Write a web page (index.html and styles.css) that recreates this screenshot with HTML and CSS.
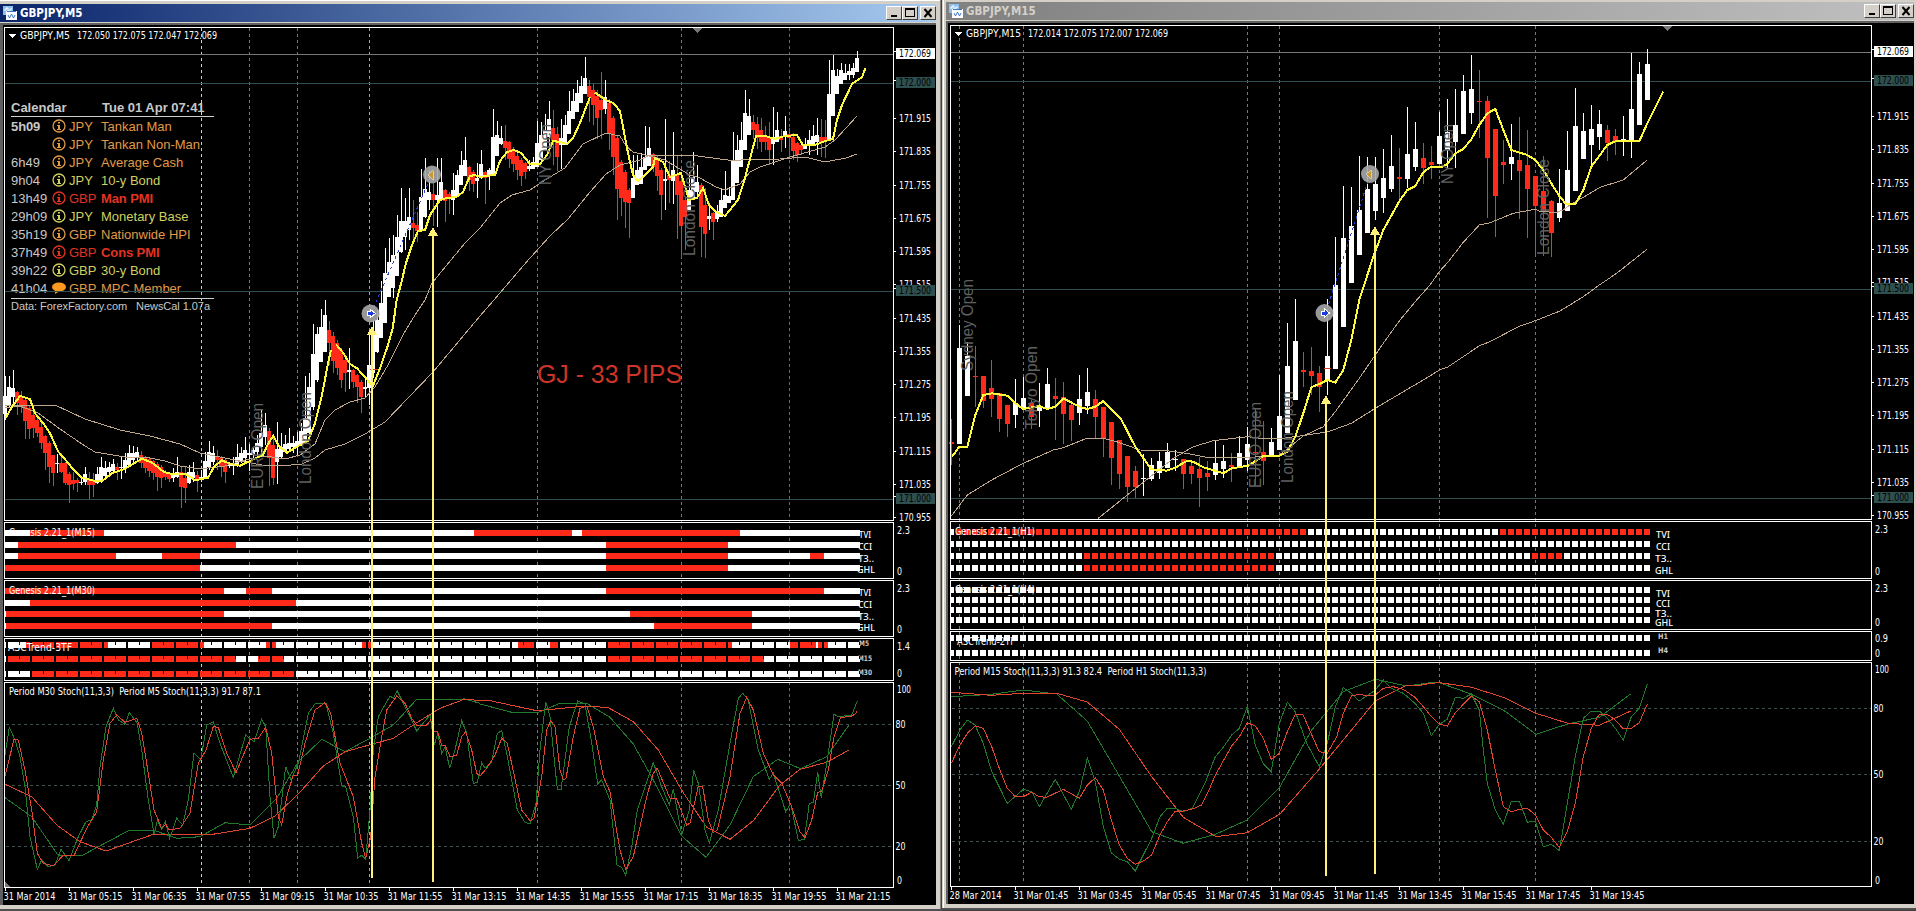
FILE: index.html
```html
<!DOCTYPE html>
<html lang="en">
<head>
    <meta charset="utf-8">
    <meta name="viewport" content="width=device-width, initial-scale=1">
    <title>GBPJPY</title>
    <link rel="stylesheet" href="styles.css">
</head>
<body>
    <div class="desktop">
        <div class="window left">
            <div class="titlebar active">
                <svg class="appicon" viewBox="0 0 14 14"><rect x="0" y="0" width="10" height="9" fill="#8ec0ee"/><path d="M1 4h2v-2h2v3h2v-2h2" fill="none" stroke="#fff"/><rect x="3" y="5" width="11" height="9" fill="#fff"/><path d="M4 5.500h9" stroke="#3a78c8"/><path d="M5 9l1.500 3 2-4 2 4 1.500-3" fill="none" stroke="#3a78c8"/></svg>
                <span class="caption">GBPJPY,M5</span>
                <div class="buttons">
                    <span class="btn"><svg viewBox="0 0 14 12"><path d="M4 8h6v2H4z"/></svg></span>
                    <span class="btn"><svg viewBox="0 0 14 12"><path d="M2 1h10v9H2zM3 3v6h8V3z" fill-rule="evenodd"/></svg></span>
                    <span class="btn close"><svg viewBox="0 0 14 12"><path d="M3.500 2l7 8M10.500 2l-7 8" stroke="#000" stroke-width="2"/></svg></span>
                </div>
            </div>
            <div class="client">
                <div class="calendar">
                    <div class="calhead"><span>Calendar</span><span>Tue 01 Apr 07:41</span></div>
                    <div class="rows" id="news"></div>
                    <div class="calfoot"><span>Data: ForexFactory.com</span><span>NewsCal 1.07a</span></div>
                </div>
                <svg id="m5" class="chart" viewBox="3 25 933 880"></svg>
            </div>
        </div>
        <div class="window right">
            <div class="titlebar">
                <svg class="appicon" viewBox="0 0 14 14"><rect x="0" y="0" width="10" height="9" fill="#8ec0ee"/><path d="M1 4h2v-2h2v3h2v-2h2" fill="none" stroke="#fff"/><rect x="3" y="5" width="11" height="9" fill="#fff"/><path d="M4 5.500h9" stroke="#3a78c8"/><path d="M5 9l1.500 3 2-4 2 4 1.500-3" fill="none" stroke="#3a78c8"/></svg>
                <span class="caption">GBPJPY,M15</span>
                <div class="buttons">
                    <span class="btn"><svg viewBox="0 0 14 12"><path d="M4 8h6v2H4z"/></svg></span>
                    <span class="btn"><svg viewBox="0 0 14 12"><path d="M2 1h10v9H2zM3 3v6h8V3z" fill-rule="evenodd"/></svg></span>
                    <span class="btn close"><svg viewBox="0 0 14 12"><path d="M3.500 2l7 8M10.500 2l-7 8" stroke="#000" stroke-width="2"/></svg></span>
                </div>
            </div>
            <div class="client">
                <svg id="m15" class="chart" viewBox="948 23 966 881"></svg>
            </div>
        </div>
    </div>
    <script src="charts.js"></script>
</body>
</html>
```

FILE: styles.css
```css
body {
    margin: 0;
    background-color: #000;
    overflow: hidden;
}
.desktop {
    display: flex;
    width: 1916px;
    height: 911px;
    background-color: #404040;
}
.window {
    display: flex;
    flex-direction: column;
    box-sizing: border-box;
    background-color: #d4d0c8;
}
.left {
    width: 942px;
    height: 911px;
    padding: 4px 6px 4px 0;
    border-bottom: 2px solid #505050;
    box-shadow: inset -1px 0 #404040, inset -2px 0 #808080, inset 0 1px #fff;
}
.right {
    width: 974px;
    height: 910px;
    padding: 2px 2px 4px 4px;
    border-bottom: 2px solid #505050;
    box-shadow: inset 1px 0 #d4d0c8, inset 2px 0 #fff;
}
.titlebar {
    display: flex;
    align-items: center;
    height: 18px;
    padding: 0 0 0 3px;
    background: linear-gradient(to right, #808080, #c0c0c0);
    color: #d4d0c8;
}
.active {
    background: linear-gradient(to right, #0a246a, #a6caf0);
    color: #fff;
}
.appicon {
    width: 14px;
    height: 14px;
}
.caption {
    flex: 1;
    margin-left: 3px;
    font: bold 11.5px "DejaVu Sans Condensed", "DejaVu Sans", sans-serif;
}
.buttons {
    display: flex;
}
.btn {
    box-sizing: border-box;
    width: 16px;
    height: 14px;
    background-color: #d4d0c8;
    border: 1px solid;
    border-color: #fff #404040 #404040 #fff;
}
.btn svg {
    display: block;
    width: 14px;
    height: 12px;
}
.close {
    margin-left: 2px;
}
.client {
    position: relative;
    flex: 1;
    box-sizing: border-box;
    margin-top: 1px;
    border-top: 2px solid #606060;
    border-left: 2px solid #606060;
    background-color: #000;
}
.left .client {
    border-left-width: 3px;
}
.chart {
    position: relative;
    display: block;
    width: 100%;
    height: 100%;
    shape-rendering: crispEdges;
}

/* news calendar, lies under the chart lines */
.calendar {
    position: absolute;
    left: 8px;
    top: 74px;
    width: 203px;
    font: 13px "Liberation Sans", Arial, sans-serif;
    color: #c8c8c8;
}
.calhead {
    display: grid;
    grid-template-columns: 91px 1fr;
    height: 17px;
    line-height: 18px;
    border-bottom: 1px solid #d0d0d0;
    font-weight: bold;
    white-space: nowrap;
}
.news {
    display: grid;
    grid-template-columns: 41px 17px 32px 1fr;
    height: 18px;
    line-height: 19px;
    white-space: nowrap;
}
.news svg {
    width: 14px;
    height: 14px;
    margin-top: 2px;
}
.news b {
    letter-spacing: -0.1px;
}
.news .time {
    color: #c8c8c8;
}
.orange {
    color: #e09a48;
}
.yellow {
    color: #cfd060;
}
.red {
    color: #e23322;
}
.calfoot {
    display: flex;
    gap: 9px;
    border-top: 1px solid #d0d0d0;
    margin-top: 1px;
    font-size: 11px;
    letter-spacing: -0.05px;
    line-height: 14px;
    white-space: nowrap;
}

/* chart parts */
.chart text {
    font: 9.8px "DejaVu Sans Condensed", "DejaVu Sans", sans-serif;
    fill: #fff;
    white-space: pre;
}
.chart .row {
    font: 500 8.8px "Noto Sans", sans-serif;
    fill: #fff;
}
.chart .tf {
    font: bold 7.5px "DejaVu Sans", sans-serif;
    fill: #c8c8c8;
}
.chart .session {
    font: 16px "Liberation Sans", Arial, sans-serif;
    fill: #606060;
}
.chart .note {
    font: 25px "Liberation Sans", Arial, sans-serif;
    fill: #cc3527;
}
.chart .dark {
    fill: #000;
}
.w {
    fill: #fff;
}
.r {
    fill: #ff2a1a;
}
.wr {
    fill: #d8402e;
}
.frame {
    fill: none;
    stroke: #fff;
}
.teal {
    fill: #2f4f4f;
}
.grey {
    fill: #777;
}
.dash {
    fill: none;
    stroke-dasharray: 3 3;
}
.level {
    fill: none;
    stroke: #3c5050;
    stroke-dasharray: 3 3;
}
.ma {
    fill: none;
    stroke: #bfa78c;
}
.fastma {
    fill: none;
    stroke: #fffb3c;
    stroke-width: 2;
}
.green {
    fill: none;
    stroke: #1f7a2c;
}
.signal {
    fill: none;
    stroke: #e0452f;
}
.trade {
    fill: none;
    stroke: #2442d8;
    stroke-dasharray: 3 3;
}
.arrow {
    fill: #fff078;
}
.marker {
    fill: #a8a8a8;
    opacity: .9;
    shape-rendering: auto;
}
```

FILE: charts.js
```js
const NS = 'http://www.w3.org/2000/svg';

function add(svg, tag, attrs, str) {
    const el = document.createElementNS(NS, tag);
    for (const k in attrs) el.setAttribute(k, attrs[k]);
    if (str) el.textContent = str;
    svg.appendChild(el);
    return el;
}

function box(svg, cls, x, y, w, h) {
    add(svg, 'rect', { class: cls, x: x, y: y, width: w, height: h });
}

// y is the middle of the text, w its drawn width
function label(svg, x, y, str, w, cls) {
    add(svg, 'text', { class: cls || '', x: x, y: y + 3.5, textLength: w, lengthAdjust: 'spacingAndGlyphs' }, str);
}

// points are in thirds of a pixel from the origin
function line(svg, cls, ox, oy, pts) {
    const p = pts.trim().split(/\s+/).map(s => {
        const [x, y] = s.split(',').map(Number);
        return (ox + x / 3).toFixed(1) + ',' + (oy + y / 3).toFixed(1);
    });
    add(svg, 'polyline', { class: cls, points: p.join(' ') });
}

function candles(svg, x0, step, width, data) {
    data.trim().split(/\s*,\s*/).forEach((row, i) => {
        const [c, h, t, b, l] = row.split(' ');
        const x = x0 + step * i;
        box(svg, c === 'r' ? 'wr' : 'w', x, +h, 1, Math.max(l - h, 1));
        box(svg, c, x - Math.floor(width / 2), +t, width, Math.max(b - t, 1));
    });
}

function frames(svg, x1, x2, list) {
    list.forEach(([top, bottom]) => box(svg, 'frame', x1 + .5, top + .5, x2 - x1, bottom - top));
}

function arrow(svg, x, top, bottom) {
    box(svg, 'arrow', x - 1, top + 8, 2, bottom - top - 8);
    add(svg, 'path', { class: 'arrow', d: `M${x} ${top}l5 9h-10z` });
}

function entry(svg, x, y) {
    add(svg, 'circle', { class: 'marker', cx: x, cy: y, r: 9 });
    add(svg, 'path', { d: `M${x - 3} ${y - 2}h3v-2l5 4-5 4v-2h-3z`, fill: '#1c3ce0', stroke: '#fff' });
}

function exit(svg, x, y) {
    add(svg, 'circle', { class: 'marker', cx: x, cy: y, r: 9 });
    add(svg, 'path', { d: `M${x - 4} ${y}l5-4v9z`, fill: '#c89a30', stroke: '#eee', 'stroke-width': .6 });
}

function session(svg, x, y, str, len) {
    add(svg, 'text', { class: 'session', transform: `translate(${x} ${y}) rotate(-90)`, textLength: len, lengthAdjust: 'spacingAndGlyphs' }, str);
}

function vline(svg, x, y1, y2, color) {
    add(svg, 'path', { class: 'dash', d: `M${x + .5} ${y1}V${y2}`, stroke: color || '#777' });
}

function prices(svg, x, first, boxes) {
    for (let i = 0; i < 13; i++) {
        const y = first + Math.round(i * 33.25);
        label(svg, x + 5, y, (171.915 - i * .08).toFixed(3), 32);
        box(svg, 'w', x, y, 2, 1);
    }
    boxes.forEach(([y, str, cls]) => {
        box(svg, cls, x + 2, y, 39, 11);
        label(svg, x + 5, y + 5.5, str, 32, 'dark');
        box(svg, 'w', x, y + 3, 2, 1);
    });
}

/* ---------- M5 ---------- */
const m5 = document.getElementById('m5');
vline(m5, 201, 28, 884, '#d6dc64');
[249, 297, 537, 681].forEach(x => vline(m5, x, 28, 884));
vline(m5, 369, 28, 884, '#e8963c');
vline(m5, 789, 28, 884, '#d04030');
box(m5, 'grey', 5, 54, 889, 1);
[83, 291, 499].forEach(y => box(m5, 'teal', 5, y, 889, 1));
[724, 785, 846].forEach(y => add(m5, 'path', { class: 'level', d: `M6 ${y + .5}H893` }));

candles(m5, 5, 4, 4, `
w 376 396 414 420,w 376 387 406 407,w 370 388 397 403,r 391 392 403 415,r 391 396 405 413,r 399 400 421 439,r 406 408 429 439,r 408 415 428 438,
r 417 420 433 437,r 423 427 443 449,r 435 436 453 470,r 441 443 467 483,r 455 455 473 486,w 454 463 464 473,r 453 463 472 473,r 462 463 483 485,
r 472 474 485 503,r 472 480 484 490,r 478 480 483 492,w 477 482 483 485,w 467 474 482 485,r 472 479 485 499,r 473 481 485 497,w 467 474 483 484,
w 457 467 482 483,w 461 468 476 480,w 462 467 472 477,w 459 464 471 474,r 463 467 470 480,w 457 467 468 479,w 453 460 468 473,w 445 453 465 467,
w 446 453 460 463,w 447 452 457 460,r 451 455 463 468,r 456 457 468 473,r 458 459 471 477,r 460 461 473 480,r 462 464 477 491,r 465 467 478 488,
r 470 472 477 480,r 473 474 479 482,w 468 473 478 482,w 457 472 477 478,r 466 472 487 508,r 467 478 488 503,w 465 472 483 484,w 462 472 478 482,
r 471 475 481 492,w 470 477 479 482,w 452 461 478 479,w 441 452 467 470,w 446 453 462 465,r 450 456 460 470,r 456 458 467 477,r 459 460 472 483,
w 462 465 466 468,w 457 463 466 475,w 444 457 466 467,w 447 453 461 463,w 437 450 458 462,w 444 453 455 471,w 447 450 455 458,w 435 443 452 455,
w 410 433 447 457,w 413 425 437 445,r 428 431 458 486,r 436 445 478 485,w 422 449 462 484,w 433 447 457 458,w 435 444 452 452,w 428 443 449 450,
w 436 443 447 453,w 432 441 447 455,w 423 431 445 446,w 376 418 443 444,w 373 387 433 435,w 324 354 407 410,w 327 334 380 382,w 309 327 362 362,
w 300 315 352 352,r 321 330 343 365,r 332 336 361 373,r 340 343 368 375,r 348 350 380 388,r 358 360 373 392,w 348 370 372 389,r 369 370 382 388,
r 374 375 387 403,r 380 382 397 413,w 377 387 389 397,w 330 365 388 405,w 320 333 373 378,w 310 320 352 353,w 281 303 338 338,w 248 273 323 323,
w 238 262 297 297,w 235 255 288 298,w 215 237 276 276,w 188 221 252 253,w 198 221 237 250,w 188 217 230 240,r 200 223 228 244,r 212 225 231 242,
w 169 197 230 230,w 158 189 217 218,w 170 192 200 210,r 178 194 200 226,w 158 195 200 227,w 158 182 200 200,r 189 190 201 222,r 192 194 198 214,
w 173 190 200 215,w 170 175 197 197,w 151 165 185 185,w 137 160 176 176,r 166 167 180 191,r 170 172 184 192,w 163 178 181 198,w 150 164 178 179,
r 171 172 178 204,w 168 170 176 190,w 109 137 175 175,w 121 135 156 156,w 126 138 144 145,r 125 141 148 160,r 141 142 159 168,r 147 149 164 172,
r 153 156 170 180,r 158 160 176 186,r 162 163 172 179,w 160 166 169 171,w 157 162 169 169,w 121 143 167 167,w 122 135 160 160,w 114 130 150 150,
w 101 119 137 150,r 110 128 141 165,r 127 134 157 171,w 119 138 145 169,w 115 125 145 145,w 91 111 134 134,w 89 101 119 119,w 80 93 112 112,
w 76 86 103 103,w 57 78 94 94,r 80 86 97 122,r 84 90 105 125,r 90 96 118 139,r 72 100 110 139,w 80 97 109 114,r 99 103 133 150,
r 116 118 157 175,r 136 138 189 220,r 160 162 198 216,r 170 172 202 228,r 188 190 203 238,w 155 178 198 198,w 155 170 185 185,w 153 167 184 184,
w 126 157 170 170,w 127 148 166 166,r 153 154 167 172,r 156 158 176 191,r 168 170 195 220,w 119 179 181 210,r 161 175 180 203,w 132 170 181 204,
r 155 174 195 239,r 172 181 226 258,r 198 200 217 250,w 172 190 210 210,w 152 177 200 200,w 165 182 192 195,r 183 185 227 257,r 188 205 234 258,
w 203 216 219 230,r 212 213 222 240,w 205 211 219 222,w 188 200 217 217,w 171 195 208 208,w 187 196 203 203,w 132 160 200 200,w 135 150 183 183,
w 122 140 167 167,w 90 113 150 150,w 99 116 135 135,r 115 122 130 139,r 117 124 138 149,r 118 130 142 152,r 126 136 142 150,r 122 138 150 165,
w 107 137 144 165,w 112 130 142 142,r 129 136 140 152,w 116 131 137 148,r 128 134 138 155,r 133 137 151 160,r 142 143 155 162,r 143 145 150 155,
w 138 144 149 149,w 130 140 146 155,w 125 136 145 145,w 118 135 142 155,r 119 137 142 157,r 120 137 141 158,w 60 94 140 140,w 55 70 116 116,
w 69 76 94 94,w 63 70 84 84,w 64 73 80 80,w 64 71 75 80,w 63 68 75 78,w 51 58 72 72`);

line(m5, 'ma', 0, 0, `15,1215 165,1215 255,1257 360,1290 450,1308 540,1332 600,1359 675,1374 735,1386 786,1395 840,1398 906,1392
945,1374 975,1350 1035,1332 1095,1302 1155,1266 1299,1116 1440,948 1500,879 1590,774 1650,708 1704,657 1770,576 1818,522 1860,495
1920,480 1950,465 2070,465 2190,481 2340,477 2415,471 2475,486 2538,474 2571,462`);
line(m5, 'ma', 0, 0, `15,1224 60,1218 114,1239 180,1287 255,1338 285,1356 375,1371 435,1371 495,1383 540,1398 600,1407 675,1398
735,1380 795,1368 855,1377 900,1365 945,1332 975,1260 1005,1230 1050,1206 1095,1194 1125,1161 1164,1095 1209,1005 1242,950 1275,900
1296,849 1395,729 1440,684 1500,609 1536,585 1590,570 1650,531 1695,504 1749,432 1818,399 1860,408 1878,438 1899,456 1935,465
1995,480 2034,504 2070,525 2100,534 2148,561 2175,570 2220,552 2250,516 2280,501 2370,471 2445,450 2475,441 2505,420 2571,348`);
line(m5, 'fastma', 0, 300, `15,357 36,320 60,288 90,297 105,340 130,370 150,400 175,455 195,478 220,508 245,533 285,543 306,543 336,520
375,506 402,490 426,476 456,488 492,516 516,522 558,522 585,541 624,533 642,500 666,481 690,492 720,497 756,480 789,464 804,432 820,408
838,440 861,458 900,435 924,423 945,370 966,285 985,185 993,150`);
line(m5, 'fastma', 0, 300, `1008,133 1029,158 1050,192 1071,205 1095,232 1119,258 1140,205 1164,135 1178,85 1190,0`);
line(m5, 'fastma', 0, 0, `1190,900 1206,840 1218,789 1236,735 1254,693 1275,690 1290,645 1320,600 1341,594 1370,590 1389,576 1410,528
1425,525 1440,531 1470,526 1485,525 1500,483 1521,456 1542,450 1563,459 1590,492 1620,492 1641,465 1659,423 1680,426 1701,432 1719,414
1740,369 1770,291`);
line(m5, 'fastma', 0, 0, `1785,278 1800,288 1818,300 1840,309 1860,333 1884,459 1899,525 1914,543 1935,525 1959,500 1965,474 1989,486 2010,531
2043,519 2067,600 2091,594 2109,564 2127,615 2145,633 2175,648 2214,600 2235,534 2268,408 2295,408 2325,417 2355,408 2391,405 2409,436
2445,435 2475,423 2499,417 2511,360 2526,315 2556,252 2586,231 2597,203`);
session(m5, 263, 489, 'EURO Open', 86);
session(m5, 311, 484, 'London Open', 92);
session(m5, 551, 185, 'NY Open', 61);
session(m5, 695, 256, 'London Close', 96);
line(m5, 'trade', 0, 0, '1113,940 1295,525');
entry(m5, 370.5, 313.5);
exit(m5, 432, 174.5);
box(m5, 'wr', 370, 369, 8, 1);
add(m5, 'text', { class: 'note', x: 537, y: 383, textLength: 145, lengthAdjust: 'spacingAndGlyphs' }, 'GJ - 33 PIPS');

// stochastics
line(m5, 'green', 0, 610, `15,563 95,620 175,737 245,737 385,662 465,662 530,685 600,680 675,638 750,645 830,565 895,455 965,388 1035,425
1110,385 1180,345 1250,268 1395,267 1440,280`);
line(m5, 'green', 480, 610, `0,282 95,307 175,307 240,280 320,280 390,322 460,402 520,510 605,678 678,742 750,645 820,500 893,448 962,476 1040,440 1107,345`);
line(m5, 'signal', 0, 610, `15,523 95,560 170,645 240,695 318,723 460,673 625,675 750,655 825,618 895,552 970,468 1035,425 1180,385 1250,338
1320,295 1395,267 1440,272`);
line(m5, 'signal', 480, 610, `0,272 35,273 170,302 320,288 385,293 460,335 535,420 610,548 680,652 750,688 820,632 900,525 960,478 1040,457 1107,420`);
line(m5, 'green', 0, 610, `15,435 28,352 45,390 60,440 75,530 90,680 112,778 125,750 145,770 165,765 183,718 207,752 235,680 258,635 275,630
290,585 300,470 318,350 340,295 355,330 375,343 388,308 412,340 425,420 445,570 462,672 472,632 485,658 496,634 509,685 530,625 548,645
565,570 582,428 602,450 620,345 640,335 660,400 700,502 737,375 762,395 785,328 797,350 810,560 822,685 835,650 857,470 873,510 895,460
925,310 945,282 978,280 1000,370 1025,528 1037,530 1060,620 1073,745 1085,735 1097,748 1110,600 1120,420 1135,320 1170,258 1180,265
1192,243 1215,290 1250,363 1290,315 1303,405 1313,370 1325,430 1335,410 1349,475 1365,420 1385,332 1400,370 1420,520 1432,518 1440,480`);
line(m5, 'green', 480, 610, `0,480 5,458 15,475 35,455 52,370 65,362 80,430 112,600 135,637 150,642 168,580 180,420 197,275 210,320 232,538
243,540 268,350 293,273 315,282 335,400 353,522 365,510 390,570 411,765 425,772 437,795 455,710 472,600 520,458 545,530 568,585 580,538
605,675 628,600 641,480 655,520 675,660 688,700 715,600 750,400 775,265 788,250 805,270 835,420 868,508 880,490 917,605 932,580 955,692
973,688 988,580 1000,578 1013,487 1024,563 1045,430 1062,312 1075,320 1115,315 1132,273`);
line(m5, 'signal', 0, 610, `15,498 42,388 55,390 75,480 95,600 112,730 130,760 160,768 190,735 222,737 260,655 290,605 310,450 330,340 350,315
375,337 410,325 425,370 445,490 462,600 485,655 497,642 507,660 540,655 570,610 595,460 618,420 640,350 655,352 680,430 708,488 750,388
775,385 797,352 815,430 835,620 845,645 860,560 880,495 893,495 915,400 945,300 975,278 992,310 1020,460 1060,560 1085,700 1097,745
1112,680 1125,500 1145,380 1160,300 1190,258 1215,280 1235,325 1250,345 1280,345 1292,330 1303,365 1313,365 1325,405 1335,405 1350,440
1370,435 1385,380 1397,365 1415,420 1430,490 1440,498`);
line(m5, 'signal', 480, 610, `0,498 20,475 45,435 65,385 82,400 125,600 150,632 162,625 185,500 200,360 212,332 225,350 240,480 250,510 258,505
280,380 300,295 320,288 340,350 370,500 390,545 420,720 437,778 460,740 500,560 520,490 532,475 570,565 590,567 620,645 630,640 655,528
668,530 685,630 700,668 712,660 750,500 780,310 800,262 820,300 850,430 880,495 905,520 935,590 960,665 975,683 995,630 1013,547 1025,543
1045,480 1062,380 1082,322 1110,320 1125,313 1132,302`);

// genesis bars
[534.5, 592.5].forEach(y => {
    label(m5, 859, y, 'TVI', 12, 'row');
    label(m5, 858, y + 12, 'CCI', 14, 'row');
    label(m5, 858, y + 24, 'T3..', 16, 'row');
    label(m5, 857, y + 35, 'GHL', 18, 'row');
});
label(m5, 859, 642, 'M5', 10, 'tf');
label(m5, 858, 657, 'M15', 14, 'tf');
label(m5, 858, 671, 'M30', 14, 'tf');
[
    [530, [30, 104, 474, 572, 582, 740]], [542, [18, 236, 606, 728]], [553, [18, 116, 162, 200, 606, 728, 810, 824]], [565, [5, 200, 606, 728]],
    [588, [5, 224, 246, 272, 606, 824]], [600, [30, 296]], [611, [6, 224, 630, 752]], [623, [6, 272, 654, 752]],
    [642, [26, 108, 152, 204, 266, 276, 362, 372, 518, 534, 550, 558, 608, 732, 790, 816, 818, 828]], [656, [8, 236, 258, 284, 608, 764]], [671, [32, 294]]
].forEach(([y, red]) => {
    box(m5, 'w', 5, y, 855, 6);
    for (let i = 0; i < red.length; i += 2) box(m5, 'r', red[i], y, red[i + 1] - red[i], 6);
    if (y > 640) {
        for (let x = 6; x < 860; x += 24) {
            box(m5, 'dark', x, y, 2, 6);
            box(m5, 'dark', x + 13, y, 1, 3);
        }
    }
});
label(m5, 9, 532, 'Genesis 2.21_1(M15)', 86);
label(m5, 9, 590, 'Genesis 2.21_1(M30)', 86);
label(m5, 8, 647, 'ASCTrend-3TF', 64);
label(m5, 9, 691.5, 'Period M30 Stoch(11,3,3)  Period M5 Stoch(11,3,3) 91.7 87.1', 252);
label(m5, 20, 35.5, 'GBPJPY,M5', 50);
label(m5, 77, 35.5, '172.050 172.075 172.047 172.069', 140);
add(m5, 'path', { class: 'w', d: 'M8 34h8l-4 4z' });
add(m5, 'path', { class: 'grey', d: 'M692 28h10l-5 5z' });
add(m5, 'path', { class: 'grey', d: 'M5 882l5 5h-5z' });
frames(m5, 4, 893, [[27, 520], [522, 578], [580, 636], [638, 680], [682, 887]]);
prices(m5, 894, 118, [[48, '172.069', 'w'], [77, '172.000', 'teal'], [285, '171.500', 'teal'], [493, '171.000', 'teal']]);
[[530, '2.3', 13], [571, '0', 5], [588, '2.3', 13], [629, '0', 5], [646, '1.4', 13], [673, '0', 5], [689.5, '100', 14], [724, '80', 10], [785, '50', 10], [846, '20', 10], [880.5, '0', 5]]
    .forEach(([y, s, w]) => label(m5, s.length === 2 ? 895.5 : 897, y, s, w));
['2014', '05:15', '06:35', '07:55', '09:15', '10:35', '11:55', '13:15', '14:35', '15:55', '17:15', '18:35', '19:55', '21:15'].forEach((t, i) => {
    label(m5, 3.5 + 64 * i, 896.5, '31 Mar ' + t, i ? 55 : 52);
    box(m5, 'w', 5 + 64 * i, 888, 1, 3);
});
arrow(m5, 372, 326, 878);
arrow(m5, 433, 227, 882);

/* ---------- M15 ---------- */
const m15 = document.getElementById('m15');
[959, 1023, 1247, 1279, 1439, 1535].forEach(x => vline(m15, x, 26, 884));
box(m15, 'grey', 951, 52, 921, 1);
[81, 289, 498].forEach(y => box(m15, 'teal', 951, y, 921, 1));
[708, 774, 841].forEach(y => add(m15, 'path', { class: 'level', d: `M952 ${y + .5}H1871` }));

candles(m15, 951, 8, 5, `
r 419 442 444 465,w 325 348 444 444,w 342 356 396 396,r 346 376 377 407,r 376 376 401 408,r 360 388 399 417,r 393 393 419 432,r 405 405 424 437,
w 379 403 415 428,w 377 398 409 409,r 400 403 417 429,w 383 406 411 427,w 368 384 409 409,r 378 396 399 440,r 382 397 414 444,r 402 405 420 441,
w 375 399 413 425,w 368 392 406 414,r 390 399 417 438,r 407 407 438 457,r 422 422 458 485,r 440 440 474 489,r 456 456 487 502,r 466 471 487 498,
w 454 478 479 496,w 458 465 479 481,w 452 461 473 479,w 443 452 468 468,w 450 459 460 471,r 459 459 474 489,r 463 466 474 484,r 457 469 478 507,
r 461 473 477 491,w 440 463 475 480,w 445 461 469 478,r 453 465 467 482,w 436 453 466 466,w 427 444 460 471,r 408 452 453 485,r 421 452 461 485,
w 428 442 456 456,w 375 416 450 450,w 323 366 433 433,w 299 341 400 400,r 352 370 372 387,r 347 371 376 395,r 366 373 387 412,w 299 356 380 395,
w 237 285 369 369,w 186 238 327 327,w 187 226 283 283,w 156 210 255 255,w 157 189 233 233,w 157 184 211 220,w 149 178 198 213,w 135 166 189 192,
r 148 177 179 201,w 107 154 179 188,w 122 149 167 171,r 143 158 168 184,r 146 162 165 179,w 112 136 164 164,w 99 132 150 168,w 89 125 142 168,
w 75 91 134 134,w 55 89 113 124,r 70 101 102 138,r 96 101 158 218,r 129 129 196 237,r 140 162 165 184,w 124 157 164 180,r 117 160 171 219,
r 130 165 189 238,r 176 176 206 256,r 156 191 212 256,r 200 201 233 257,w 169 203 218 222,w 131 170 211 211,w 88 126 191 191,w 113 131 159 159,
w 105 129 145 166,w 110 124 137 150,r 125 130 143 161,r 129 136 142 155,w 116 139 140 156,w 53 109 140 158,w 62 74 125 125,w 49 64 100 100`);

line(m15, 'ma', 940, 300, `34,648 82,585 155,540 250,490 340,450 370,443 440,415 490,415 530,425 600,450 680,452 740,460 800,472 900,474 960,470
1018,465 1050,440 1090,408 1150,380 1186,335 1258,235 1330,130 1380,60 1430,0 1470,-45`);
line(m15, 'ma', 1430, 0, `0,855 28,815 55,785 100,727 148,675 180,668 250,640 316,628 330,635 380,637 400,630 420,615 460,592 510,562 580,540 652,480`);
line(m15, 'ma', 940, 300, `475,655 562,585 650,515 700,475 760,440 820,422 922,410 960,415 1030,415 1100,405 1165,395 1234,370 1306,325 1390,275 1470,228`);
line(m15, 'ma', 1430, 300, `0,228 28,210 52,202 100,170 148,137 180,125 265,80 316,62 390,33 460,-10 508,-45 560,-80 652,-153`);
line(m15, 'fastma', 940, 300, `36,470 58,440 82,440 106,345 130,285 155,280 202,287 226,310 250,327 298,318 322,327 346,320 370,295 418,320 442,327
466,320 490,303 542,355 586,440 634,508 680,512 706,503 740,483 760,485 790,502 826,512 850,520 875,505 925,497 970,468 1018,468 1042,455
1066,410 1090,340 1114,262 1138,252 1162,240 1186,248 1210,210 1234,120 1258,0 1300,-130 1330,-210 1378,-296 1402,-330 1426,-342 1450,-383 1470,-398`);
line(m15, 'fastma', 1430, 0, `0,500 38,500 52,492 76,460 100,447 124,418 148,375 172,340 196,327 220,390 244,450 292,465 316,480 340,510 364,550
388,588 408,612 436,612 460,570 484,500 532,435 556,424 628,424 652,370 700,275`);
session(m15, 973, 371, 'Sydney Open', 92);
session(m15, 1037, 429, 'Tokyo Open', 83);
session(m15, 1261, 488, 'EURO Open', 86);
session(m15, 1293, 483, 'London Open', 92);
session(m15, 1453, 184, 'NY Open', 60);
session(m15, 1549, 255, 'London Close', 96);
line(m15, 'trade', 0, 0, '3980,930 4107,534');
entry(m15, 1324.5, 313);
exit(m15, 1370, 174);
box(m15, 'wr', 1324, 368, 7, 1);

line(m15, 'green', 940, 610, `34,260 154,253 250,240 350,252 442,333 538,498 635,665 730,700 826,673 922,630 1020,530 1115,360 1210,245 1306,208 1400,228 1470,218`);
line(m15, 'green', 1430, 610, `0,218 28,218 125,253 220,300 318,373 413,342 508,322 602,252`);
line(m15, 'signal', 940, 610, `34,247 154,256 250,250 350,250 442,276 538,358 635,500 730,622 828,680 922,668 1020,612 1140,475 1306,273 1395,228 1440,226 1470,220`);
line(m15, 'signal', 1430, 610, `0,220 28,218 125,232 220,262 318,310 413,340 508,346 602,303`);
line(m15, 'green', 940, 610, `34,410 60,360 82,330 105,345 130,400 155,485 202,580 250,538 275,545 298,590 346,508 394,598 418,545 442,445 466,515
490,650 514,728 538,748 562,755 586,783 635,685 660,620 682,595 706,595 730,605 757,595 795,520 826,440 850,412 875,375 898,355 922,290
946,405 970,462 994,485 1018,340 1042,277 1066,305 1100,400 1138,470 1162,400 1186,290 1210,233 1234,250 1258,273 1306,240 1330,210
1354,235 1390,250 1425,280 1450,310 1470,365`);
line(m15, 'green', 1430, 610, `0,365 4,377 28,343 52,328 76,262 100,265 124,252 148,300 160,420 172,520 196,600 220,643 244,573 268,573 292,637
316,633 340,710 364,703 388,722 412,580 436,440 460,325 484,303 508,303 532,325 556,355 580,390 604,320 628,295 652,222`);
line(m15, 'signal', 940, 610, `34,460 60,405 82,370 106,347 130,355 155,410 178,475 202,535 226,560 250,560 275,547 298,560 320,562 370,538 418,565
442,525 466,503 490,540 514,630 538,705 562,745 586,763 610,753 635,735 660,675 682,635 706,603 730,603 757,597 785,585 805,545 826,495
875,408 898,380 922,338 946,348 970,385 994,448 1018,430 1042,365 1066,312 1090,315 1114,372 1138,425 1162,430 1190,380 1210,310 1234,258
1258,253 1282,258 1306,255 1330,235 1360,230 1390,238 1425,262 1450,290 1470,315`);
line(m15, 'signal', 1430, 610, `0,315 28,342 52,348 76,308 124,258 148,275 172,360 196,480 220,590 244,606 268,598 292,595 316,615 340,660 364,682
388,712 412,665 436,580 460,440 484,355 508,313 532,313 556,330 580,357 604,355 628,338 652,282`);

[
    [529, [[1, 44], [69, 87]]], [541, []], [553, [[17, 40], [73, 76]]], [565, [[17, 40]]],
    [587, []], [597, []], [607, []], [617, []], [635, []], [650, []]
].forEach(([y, red]) => {
    box(m15, 'w', 951, y, 3, 6);
    for (let i = 1; i < 88; i++) {
        const isRed = red.some(([a, b]) => i >= a && i <= b);
        box(m15, isRed ? 'r' : 'w', 948 + 8 * i, y, 6, 6);
    }
});
[[534, 546, 558, 570], [593, 603, 613, 622.5]].forEach(([a, b, c, d]) => {
    label(m15, 1656, a, 'TVI', 14, 'row');
    label(m15, 1656, b, 'CCI', 14, 'row');
    label(m15, 1655, c, 'T3..', 17, 'row');
    label(m15, 1655, d, 'GHL', 18, 'row');
});
label(m15, 1658, 635.5, 'H1', 10, 'tf');
label(m15, 1658, 649.5, 'H4', 10, 'tf');
label(m15, 955, 531, 'Genesis 2.21_1(H1)', 80);
label(m15, 955, 589, 'Genesis 2.21_1(H4)', 80);
label(m15, 957, 641, 'ASCTrend-2TF', 58);
label(m15, 954.5, 671.5, 'Period M15 Stoch(11,3,3) 91.3 82.4  Period H1 Stoch(11,3,3)', 252);
label(m15, 966, 33.5, 'GBPJPY,M15', 55);
label(m15, 1028, 33.5, '172.014 172.075 172.007 172.069', 140);
add(m15, 'path', { class: 'w', d: 'M954 32h8l-4 4z' });
add(m15, 'path', { class: 'grey', d: 'M1662 26h10l-5 5z' });
frames(m15, 950, 1871, [[25, 519], [521, 578], [580, 629], [631, 660], [662, 886]]);
prices(m15, 1872, 116, [[46, '172.069', 'w'], [75, '172.000', 'teal'], [283, '171.500', 'teal'], [492, '171.000', 'teal']]);
[[529, '2.3', 13], [571, '0', 5], [588, '2.3', 13], [622.5, '0', 5], [638, '0.9', 13], [653.5, '0', 5], [669.5, '100', 14], [708, '80', 10], [774, '50', 10], [841, '20', 10], [880, '0', 5]]
    .forEach(([y, s, w]) => label(m15, s.length === 2 ? 1873.5 : 1875, y, s, w));
['28 Mar 2014', '31 Mar 01:45', '31 Mar 03:45', '31 Mar 05:45', '31 Mar 07:45', '31 Mar 09:45', '31 Mar 11:45', '31 Mar 13:45', '31 Mar 15:45', '31 Mar 17:45', '31 Mar 19:45'].forEach((t, i) => {
    label(m15, 949.5 + 64 * i, 895.5, t, i ? 55 : 52);
    box(m15, 'w', 951 + 64 * i, 887, 1, 3);
});
arrow(m15, 1326, 395, 876);
arrow(m15, 1375, 226, 874);

/* ---------- calendar rows ---------- */
const news = [
    ['5h09', 'JPY', 'Tankan Man', 'orange'],
    ['', 'JPY', 'Tankan Non-Man', 'orange'],
    ['6h49', 'JPY', 'Average Cash', 'orange'],
    ['9h04', 'JPY', '10-y Bond', 'yellow'],
    ['13h49', 'GBP', 'Man PMI', 'red'],
    ['29h09', 'JPY', 'Monetary Base', 'yellow'],
    ['35h19', 'GBP', 'Nationwide HPI', 'orange'],
    ['37h49', 'GBP', 'Cons PMI', 'red'],
    ['39h22', 'GBP', '30-y Bond', 'yellow'],
    ['41h04', 'GBP', 'MPC Member', 'orange']
];
const info = '<svg viewBox="0 0 14 14"><circle cx="7" cy="7" r="6" fill="none" stroke="currentColor" stroke-width="1.300"/><path d="M6 3h2v1.500H6zM5 6h3v4h1v1H5v-1h1V7H5z" fill="currentColor"/></svg>';
const speech = '<svg viewBox="0 0 14 14"><ellipse cx="7" cy="6" rx="7" ry="4.500" fill="#ff9a20"/><path d="M3 8v5l5-3z" fill="#ff9a20"/></svg>';
document.getElementById('news').innerHTML = news.map(([time, cur, name, cls], i) => {
    const t = i === 0 ? `<b>${time}</b>` : time;
    const n = cls === 'red' ? `<b>${name}</b>` : name;
    return `<div class="news ${cls}"><span class="time">${t}</span>${i === 9 ? speech : info}<span>${cur}</span><span>${n}</span></div>`;
}).join('');
```
